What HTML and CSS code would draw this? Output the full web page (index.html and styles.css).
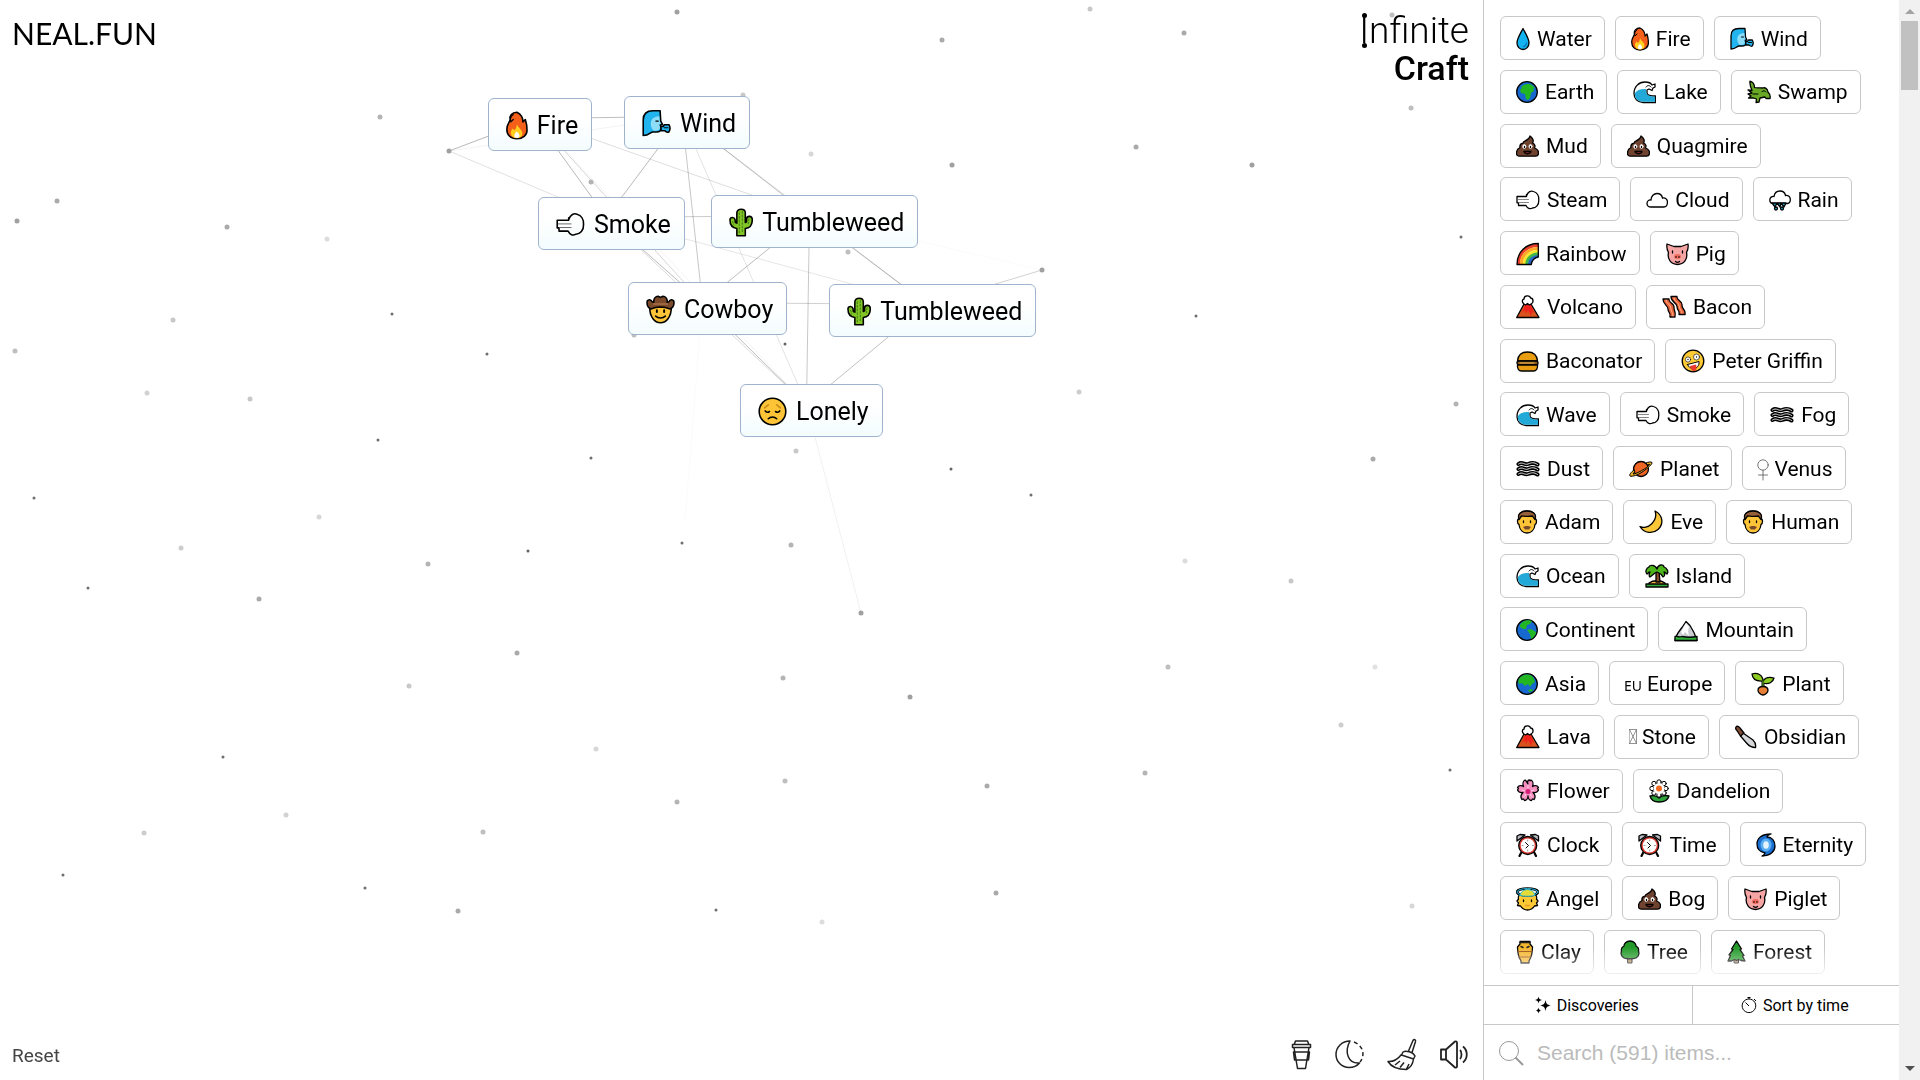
FILE: index.html
```html
<!DOCTYPE html>
<html lang="en">
<head>
    <meta charset="UTF-8">
    <meta name="viewport" content="width=device-width, initial-scale=1.0">
    <title>Infinite Craft</title>
    <link rel="stylesheet" href="styles.css">
</head>
<body>
    <!-- icon set -->
    <svg class="sprite" aria-hidden="true">
        <g id="drop">
            <path fill="#12b3f0" d="M7 1.500C5 5.500 1 11.500 1 16a6 6.500 0 0 0 12 0C13 11.500 9 5.500 7 1.500z"/>
            <path stroke="#0a78bd" d="M10.500 16a3.500 3.500 0 0 1-3 3.500"/>
        </g>
        <g id="fire">
            <path fill="#f4601a" d="M9 1c4 2 5 5 5 8l2-2c1 3 1.400 6 1.400 9 0 4-3.400 7-8.400 7s-8.300-3-8.300-8C.700 11 3 9.500 3.500 7 2.500 4 5 1 9 1z"/>
            <path stroke-width="1" d="M6 3c-2 1-3 4-2 6l2-2"/>
            <path fill="#ffcf1f" stroke="none" d="M9 11c1 3 4 4 4.500 7 .300 3-2 4.500-4.500 4.500S4 21 4 18c0-2 1-2.500 1.500-3.500L7 16c1-1 2-3 2-5z"/>
            <path fill="#fff" stroke="none" d="M9 17c2 2 2.500 3 2 4.500-1 1-3 1-4 0C6.500 20 7 19 9 17z"/>
        </g>
        <g id="wind">
            <path fill="#22b4ee" d="M1 22V9c0-5 3-7.500 8-7.500h6l.500 8.500 1.500 3h-2l1 3c0 2-1 3-4 3H9c-2 0-3 3-8 3z"/>
            <path fill="#8ddcf8" stroke="none" d="M8 9c1-2 4-3 6.300-3l.400 4 1 2.400-1.500.400.800 3c-1 2-3 2.500-5.500 2-2-2-3-6-1.500-8.800z"/>
            <path stroke-width="1" d="M11.500 10h2"/>
            <path fill="#22b4ee" d="M15.500 14.500h2l1-1.500h3.800c1.200 2 1.200 4 0 6-1.500.500-2.600 0-3.300-1h-3z"/>
            <path stroke-width="1" d="M18.500 15.500h3"/>
        </g>
        <g id="earth">
            <circle cx="11" cy="12" r="10.300" fill="#1768cf"/>
            <path fill="#22b722" stroke="none" d="M5 7c3-3 8-4 11-2l3 3-2 1 1 2-3 2-1 5-2 2-2-1-1-5-4-1-1-3 2-2z"/>
        </g>
        <g id="americas">
            <circle cx="11" cy="12" r="10.300" fill="#1768cf"/>
            <path fill="#22b722" stroke="none" d="M4 7c2-4 8-6 12-4l-2 3-3 1-1 4-3 0-3-2zM11 12l4-1 5 3c0 3-3 6-5 7l-1-5z"/>
        </g>
        <g id="asia">
            <circle cx="11" cy="12" r="10.300" fill="#1768cf"/>
            <path fill="#22b722" stroke="none" d="M3 7c3-5 10-6 14-2l2 5-3 2-2 3-2-3-3 2-3-3-3 1c-1-2-1-3 0-5zM12 18l4-1 1 2-4 1z"/>
        </g>
        <g id="wave">
            <path fill="#fff" d="M22.500 22.500H10c-5.500 0-9-4-9-9C1 6.500 6 2 12 2c4 0 6 1 7 3l3-1v3l-2 1-1 2.500-3-1.500-2 1v3c0 2 2 3 8.500 3z"/>
            <path fill="#22a9d8" stroke="none" d="M2 13c2-3 6-4.500 11-4 0 5 1 7.500 9 7.700v5.100H10c-5 0-9-4-8-8.800z"/>
            <path stroke-width="1" d="M13 7c1.500-2 3.500-2 5 0"/>
        </g>
        <g id="swamp">
            <path fill="#69a825" d="M3 1.200C6 2 7.500 4 7.500 7.500c3 1 5 0 8 .500 3-1 5 1 5.500 4 2 2 2.500 4.500 2 6.500h-4l-1-1.500-5 1-1 4-3 .500.500-3.500-3-1H1.500L4 16l-3-2 4-1-4-3 4 .500C3.500 7 2.500 4 3 1.200z"/>
            <path stroke-width="1" d="M6 14h5M15 11.500c1.500-1 3-1 4 .500"/>
        </g>
        <g id="poo">
            <path fill="#6f4330" d="M14 2c3 2 4 5 2.500 7 2.500 1 3 3 2 5 3 1 4 3 4 5 0 2-1 3.200-3 3.200h-16c-2 0-3-1.200-3-3 0-3 1-4.500 3.500-5.500-.500-2.500.500-4 3-4.500 0-3 6-2 7-7z"/>
            <g fill="#fff" stroke="#fff" stroke-width=".800"><ellipse cx="8.300" cy="12.500" rx="1.500" ry="2"/><ellipse cx="14.500" cy="12.500" rx="1.500" ry="2"/></g>
            <path d="M8.500 12.500v1M14.500 12.500v1"/>
            <path fill="#a2342a" d="M8 17.500h7c-.500 3-6.500 3-7 0z"/>
        </g>
        <g id="puff">
            <path d="M10.500 8C12 3.500 15 2.500 17.500 3.500 21 4.500 23 8 22.800 12c.200 5-2.800 8-6.300 8-2.500 1.500-5 .500-6.500-2.500H2.500v-2.700H1V8.500h9.500V6.500"/>
            <path stroke="#666" stroke-width=".800" d="M2 11.500h10.500M3 14.500h9.500"/>
        </g>
        <g id="cloud">
            <path d="M5 19c-2.500 0-4-1.500-4-3.500C1 13 3 11.500 5 12c0-4 3-6.500 6-6.500s5 2 5.500 4.500c3-.500 4.500 1.500 5 3.500 0 3-1 5.500-3.500 5.500z"/>
        </g>
        <g id="rain">
            <path d="M4 15.500c-2 0-3.200-1.500-3.200-3.500C.800 9.500 3 8 5 8.500 5.500 5 8 3 11 3s5 2 5.500 4.500c3-.500 4.500 1.500 4.800 3.500.200 2.500-.800 4.500-2.800 4.500z"/>
            <g fill="#1ba3c9"><path d="M3 15l5 0-2 4zM8 15l4 0-1 4zM12 15h5l-2 4z"/><circle cx="7" cy="20.500" r="1.500"/><circle cx="13" cy="20.500" r="1.500"/></g>
        </g>
        <g id="rainbow">
            <g stroke-width="3.200" stroke-linecap="butt"><path stroke="#e8402b" d="M2.500 22C2.500 11 11 3.500 22 3.500"/><path stroke="#ffa726" d="M5.500 22c0-9 7-15.500 16.500-15.500"/><path stroke="#f7e52e" d="M8.500 22C8.500 15 14 9.500 22 9.500"/><path stroke="#43b649" d="M11 22c0-5.500 5-10 11-10"/><path stroke="#2567c9" d="M13.500 22c0-4 4-7.500 8.500-7.500"/></g>
            <path d="M1 22.500C1 10 10 1.500 22.300 1.500V15c-3.500 0-7 4-7 7.500z"/>
        </g>
        <g id="pig">
            <path fill="#f6a5a5" d="M1 2l7 2.500h7L22 2c.500 3 0 6-1.500 8.500C22 17 18 22.500 11.500 22.500S1 17 2.500 10.500C1 8 .500 5 1 2z"/>
            <path d="M6.500 9v2M16.500 9v2M9.500 19.500c1 .800 3 .800 4 0"/>
            <ellipse cx="11.500" cy="14.500" rx="3.500" ry="2.500" fill="#ef6a5c" stroke="none"/>
            <path stroke-width="1" d="M10 14.500v1M13 14.500v1"/>
        </g>
        <g id="volcano">
            <path fill="#d9531e" d="M8 9h7l8 13.500H.700z"/>
            <path fill="#f0231c" stroke="none" d="M9 10h6l3 8-2-1-1 4-3-6-2 4-1-4-3 3z"/>
            <path fill="#fff" d="M8 9C5.500 7 6 4.500 8 4c0-4 6-4 6.500-1 3 0 3.500 5 .500 6l-1.500 1-2-1.500-2 1.500z"/>
        </g>
        <g id="bacon">
            <path fill="#e8633a" d="M1 4h6c-1 4 6 4 5 9 0 3 2 3 1 9H8c1-5-2-4-2-8 0-4-5-4-5-10z"/>
            <path fill="#e8633a" d="M9 1.500h6c-1 4 6 4 5 9 0 4 4 4 3 9h-6c1-4-2-4-2-8 0-4-6-4-6-10z"/>
            <path stroke="#ffb28c" stroke-width="1" d="M4 5c0 4 5 4 5 9 0 3 2 3 2 7M12 3c0 4 5 4 5.500 9 0 3 2.500 3 2.500 6"/>
        </g>
        <g id="burger">
            <path fill="#e99d10" d="M1.500 12C2 6 6 3 11.500 3S21 6 21.500 12z"/>
            <rect x="1" y="12" width="21" height="4" rx="2" fill="#8a5a1e"/>
            <path stroke="#f4b64e" stroke-width="1" d="M4 14h14"/>
            <path fill="#e99d10" d="M1.500 16h20c.500 3-1 6-4 6H5.500c-3 0-4.500-3-4-6z"/>
        </g>
        <g id="zany">
            <circle cx="12" cy="12" r="10.800" fill="#ffcb35"/>
            <g fill="#fff" stroke-width=".600"><circle cx="7" cy="10.500" r="2.600"/><circle cx="15.500" cy="8" r="3"/></g>
            <path d="M7 10.500v.100M15.500 8v.100"/>
            <path fill="#fff" stroke-width="1" d="M6.500 15.500l11.500-3c.500 4-2 7-5.500 7-3 0-5-1.500-6-4z"/>
            <path fill="#ea3a2e" stroke="none" d="M9 17l6-1.500c1 3 .500 6-1.500 6.500C11 22.500 9.500 20 9 17z"/>
        </g>
        <g id="fog">
            <path stroke-width="4" d="M2.500 7c4-3 6 1.500 9.500 0s6-2 9.500.500M2.500 12c4-3 6 1.500 9.500 0s6-2 9.500.500M2.500 17c4-3 6 1.500 9.500 0s6-2 9.500.500"/>
            <path stroke="#ddd" stroke-width="1" d="M2.500 7c4-3 6 1.500 9.500 0s6-2 9.500.500M2.500 12c4-3 6 1.500 9.500 0s6-2 9.500.500M2.500 17c4-3 6 1.500 9.500 0s6-2 9.500.500"/>
        </g>
        <g id="planet">
            <circle cx="12" cy="12" r="7.500" fill="#ee6524"/>
            <path fill="#f0b429" stroke-width="1" d="M5 13c-3 2-5 5-4 6 2 1 8-1 13-4.500S23.500 7 23 5.500c-1-1-4-.500-6 .500l1.500 1.500 2-.200c-1 2-4 4.200-8 6.400-4 2.200-7.500 3.500-8.500 3.300l1.500-2z"/>
        </g>
        <g id="venus">
            <g stroke="#555" stroke-width=".800"><circle cx="6" cy="8" r="5.200"/><path d="M6 13.200V23M1.500 18h9"/></g>
        </g>
        <g id="man">
            <path fill="#fcc436" d="M3 9C2 3 6 1 11 1s9 2 8 8c2 0 2 5 0 5.500C18.500 20 15 23 11 23s-7.500-3-8-8.500C1 14 1 9 3 9z"/>
            <path fill="#96603a" d="M3 9.500C1 4 5 1 11 1s10 3 8 8.500C18 8 17 7 16.500 6 12 7 7 6 5.500 6z"/>
            <path d="M7.500 11v1.500M14.500 11v1.500"/>
            <path fill="#7a4a2b" stroke="none" d="M7 17c2-1.500 6-1.500 8 0l-2 2.500H9z"/>
        </g>
        <g id="moon">
            <path fill="#fbc638" d="M16 1c8 4 9 13 3 18.500C14 24 5 23.500 1 16.500c3 1.500 8 1 11.500-2.500C16.500 10 17.500 5 16 1z"/>
        </g>
        <g id="island">
            <path fill="#f5b340" d="M4 19c4-3 12-3 16 0v3H4z"/>
            <path fill="#8a4f24" d="M11 7h3l1 11h-4z"/>
            <path fill="#4db51c" d="M12 5C10 0 4 1 4 3 1 4 0 8 2 10c1-1 2-2 3-2-1 2-1 4 0 5 2-1 4-4 7-5 3 1 5 3 6 5 2-1 2-3 1-5 1 0 2 1 3 2 2-2 0-6-3-7 0-3-6-3-7 2z"/>
            <path fill="#32a838" d="M1 20h22v3H1z"/>
        </g>
        <g id="mountain">
            <path fill="#c9cbd0" d="M1 22.500c1-6 4-9 7-13l4-6 4 4 4 7 3 8z"/>
            <path fill="#fff" stroke="none" d="M12 5l3 4-1 4 1 5-4-4-2 3-2-3z"/>
            <path fill="#2fae3a" d="M1 22.500v-4c3-.500 4 1 7 0 5 1 10 1 15 0v4z"/>
        </g>
        <g id="plant">
            <path stroke-width="3" d="M12 9v8"/>
            <path fill="#8ccb20" d="M1 2c5-2 11 1 11 7C6 9.500 1.500 8 1 2z"/>
            <path fill="#8ccb20" d="M12 11c0-4 4-7 11-5-1 4-5 7-11 5z"/>
            <path stroke="#5a9e18" d="M12 9v7"/>
            <path fill="#e77f36" d="M12 14.500c4 0 5 2 5 4s-3 4.500-5 4.500-5-2.500-5-4.500 1-4 5-4z"/>
        </g>
        <g id="tofu">
            <path stroke="#777" stroke-width=".800" d="M.500 4.500h7v14h-7zM.500 4.500l7 14M7.500 4.500l-7 14"/>
        </g>
        <g id="knife">
            <path fill="#d4d6da" d="M8 8l10 7c2 2 3 5 2.500 7.500-4 0-7-2-9-4.500l-6-7z"/>
            <path fill="#7c4a30" d="M1 2c1-1.500 3-.500 4 1l4 5-3.500 3L1.500 5C.500 4 .500 3 1 2z"/>
        </g>
        <g id="flower">
            <path fill="#f48fc0" d="M12 5c-1-2 0-4 1-4.200l1 1 1-.800c2 1 2.500 4 1.500 6.500 2-1.500 5-1 6 1l-1 1 1 1.500c-1 2-3 3-5.500 2.500 2 2 2.500 5 1 7l-1.500-.500-1 1.500c-2 0-3.500-2-3.500-4.500 0 2.500-1.500 4.500-3.500 4.500l-1-1.500-1.500.500c-1.500-2-1-5 1-7-2.500.500-4.500-.500-5.500-2.500l1-1.500-1-1C2.500 6.500 5.500 6 7.500 7.500 6.500 5 7 2 9 1l1 .800z"/>
            <path stroke="#ffd0e6" stroke-width="1" d="M12 9V6M9 12l-3-1M15 12l3-1M10 15l-2 3M14 15l2 3"/>
            <circle cx="12" cy="12.500" r="2.500" fill="#d81e76" stroke="none"/>
        </g>
        <g id="daisy">
            <path fill="#2fa33c" d="M1 17c4-1 7 0 9 2 2-2 6-3 10-2-1 4-4 6-10 6S2 21 1 17z"/>
            <g fill="#fff" stroke-width="1"><circle cx="10" cy="3" r="2.200"/><circle cx="15" cy="4.500" r="2.200"/><circle cx="17" cy="9.500" r="2.200"/><circle cx="15" cy="14" r="2.200"/><circle cx="10" cy="16" r="2.200"/><circle cx="5" cy="14" r="2.200"/><circle cx="3" cy="9.500" r="2.200"/><circle cx="5" cy="4.500" r="2.200"/></g>
            <circle cx="10" cy="9.500" r="5.500" fill="#fff" stroke="none"/>
            <circle cx="10" cy="9.500" r="3" fill="#f26a21" stroke="none"/>
        </g>
        <g id="clock">
            <path stroke-width="2.200" d="M5 20l-1.500 3M18.500 20l1.500 3"/>
            <path fill="#b8bcc2" d="M1 8V3l3-1.500 5 .500zM22.500 8V3l-3-1.500-5 .500z"/>
            <circle cx="11.700" cy="12.500" r="9" fill="#d8382c"/>
            <circle cx="11.700" cy="12.500" r="7" fill="#fff" stroke="none"/>
            <path stroke-width="1" d="M9.500 9.500l3 3-2.500 2.500"/>
            <path stroke="#999" stroke-width="1" d="M11.700 7v1M11.700 17v1M6 12.500h1M16.500 12.500h1"/>
        </g>
        <g id="cyclone">
            <path fill="#1b6fd0" d="M15 1c-3 1-4 2-4 3 5 0 8 4 8 9s-4 9.500-13 10c2-1 3-2 3-3-5-1-8-4-8-9 0-6 5-10 14-10z"/>
            <ellipse cx="10" cy="12" rx="5.500" ry="6.500" fill="#5aaef2" stroke="none"/>
            <ellipse cx="10" cy="12" rx="2.800" ry="3.800" fill="#e4f4ff" stroke="none"/>
        </g>
        <g id="angel">
            <path fill="#fcc935" d="M3 8C2 10 2 11 2.500 12l-1.500 2 1.500 2-1 2.500 3 .500c2 3 4 4 7 4s5-1 7-4l3-.500-1-2.500 1.500-2-1.500-2c.500-1 .500-2-.500-4z"/>
            <ellipse cx="11.500" cy="5" rx="10.500" ry="3.500" stroke-width="2.600"/>
            <ellipse cx="11.500" cy="5" rx="10.500" ry="3.500" stroke="#29b4d8" stroke-width="1"/>
            <path fill="#e5dd37" stroke="#29b4d8" stroke-width="1" d="M4 8.500C5 .500 18 .500 19 8.500c-4 1-11 1-15 0z"/>
            <path d="M7.500 13v1.500M15.500 13v1.500"/>
            <path stroke="#e89a2a" d="M9.500 18.500h4"/>
        </g>
        <g id="jar">
            <path fill="#f4b62c" d="M4 1.500h10v2.500l2.500 3c0 5-1 10-3.500 14v2H5v-2C2.500 17 1.500 12 1.500 7L4 4z"/>
            <path stroke="#9a4e12" stroke-width="1" d="M2 11.500h14M2.500 17h12"/>
            <path stroke="#222" stroke-width="1.500" d="M4 2.500h10M5 6.500l2 1M13 6.500l-2 1"/>
        </g>
        <g id="tree">
            <path fill="#b0855c" stroke-width="1" d="M8 17h4v6H8z"/>
            <path fill="#239a28" d="M10 1c4 0 6 3 6 5 2 1 3 3 2.500 5C20 15 17 19 13 18.500c-2 .500-4 .500-6 0C3 19 0 15 1.500 11 1 9 2 7 4 6c0-2 2-5 6-5z"/>
        </g>
        <g id="pine">
            <path fill="#b0855c" stroke-width="1" d="M7.500 19h4v4h-4z"/>
            <path fill="#239a28" d="M9.500 1l5 8-1.500.500 4 6-1.500.500 2.500 5-4-.500-2.500-1-2 1-2-1-3 1.500-3.500 0 2.500-5.500L2 15l4-5.500L4.500 9z"/>
        </g>
        <g id="cactus">
            <path fill="#82c526" d="M6.500 23v-6C2 16.500.800 13.500.800 10c0-3 3.700-2.500 4.200-.500l.300 2.500 1.200.500V4c0-4 7-4 7 0v8l1-.500V9c.500-3 4.500-2.500 4.700 0 .300 4-1.200 7.500-5.700 8v6z"/>
            <path stroke="#3d7a12" stroke-width=".800" stroke-dasharray="1.500 1.500" d="M8.500 4v17M11 3v18M3 11l1 3M16.500 9l-.500 4"/>
        </g>
        <g id="cowboy">
            <path fill="#fcc436" d="M3 10c0 8 4 13 9 13s9-5 9-13z"/>
            <path fill="#7a4a2b" d="M1 5c1-1.500 3-1.500 4 .500L6.500 6C6 3 8 1 10 1l2 1 2-1c2 0 4 2 3.500 5L19 5.500c1-2 3-2 4-.500.500 3-.500 5.500-3 6.500-5-2-11-2-16 0C1.500 10.500.500 8 1 5z"/>
            <path stroke="#a9724b" d="M6.500 7.500h11"/>
            <path stroke-width="1.600" d="M9 12.500v1.500M15 12.500v1.500"/><path d="M8 17.500c2 2 6 2 8 0"/>
        </g>
        <g id="pensive">
            <circle cx="12" cy="12" r="11" fill="#fcc436"/>
            <path d="M6 11.500c1 1.200 2.500 1.200 3.500.500M14.500 12c1 .700 2.500.700 3.500-.500M8.500 18c2-2 5-2 7 0"/>
            <path stroke="#c98a1c" d="M5.500 9l3-2.500M18.500 9l-3-2.500"/>
        </g>
    </svg>

    <div class="container">
        <main class="board">
            <canvas class="particles" id="particles"></canvas>
            <a class="site-logo" href="#">NEAL.FUN</a>
            <h1 class="logo"><span class="logo-top"><span class="logo-initial">I</span>nfinite</span><span class="logo-bottom">Craft</span></h1>

            <div class="instance pos-fire"><svg class="icon" viewBox="0 0 18 24"><use href="#fire"/></svg>Fire</div>
            <div class="instance pos-wind"><svg class="icon" viewBox="0 0 24 24"><use href="#wind"/></svg>Wind</div>
            <div class="instance pos-smoke"><svg class="icon" viewBox="0 0 24 24"><use href="#puff"/></svg>Smoke</div>
            <div class="instance pos-tumbleweed"><svg class="icon" viewBox="0 0 20 24"><use href="#cactus"/></svg>Tumbleweed</div>
            <div class="instance pos-cowboy"><svg class="icon" viewBox="0 0 24 24"><use href="#cowboy"/></svg>Cowboy</div>
            <div class="instance pos-tumbleweed-2"><svg class="icon" viewBox="0 0 20 24"><use href="#cactus"/></svg>Tumbleweed</div>
            <div class="instance pos-lonely"><svg class="icon" viewBox="0 0 24 24"><use href="#pensive"/></svg>Lonely</div>

            <footer class="board-footer">
                <button class="reset">Reset</button>
                <div class="tools">
                    <button class="tool" aria-label="Coffee"><svg viewBox="0 0 30 30"><path d="M8 6l1.500-4h12L23 6M6.500 5.500h18v3h-18zM8 8.500l3.500 21h8l3.500-21M7.500 13h16l-1 8h-14z"/></svg></button>
                    <button class="tool" aria-label="Dark mode"><svg viewBox="0 0 30 30"><path d="M13 2C5 2-1 8-1 15.500S5 28.500 12 28.500c4.500 0 8-1.500 10.500-4.500C11 25 7 13 13 2z"/><path stroke-dasharray="4 3" d="M17 3c10 4 11 14 6 20"/></svg></button>
                    <button class="tool" aria-label="Clear board"><svg viewBox="0 0 30 30"><path d="M20.500 12L25 1.500c1-1.500 3-1 2.500 1L24 13.500M15 13c3-2 10 0 12 4l-1.500 3L13.500 16zM13.500 15.500C10 20 6 23 0 22.500c3 5 9 8 18.500 8C24 28 25 24 25.500 20M7 26l5-4M12 28.500l4-5M18.500 30l2.500-5"/></svg></button>
                    <button class="tool" aria-label="Sound"><svg viewBox="0 0 30 30"><path stroke-width="1.800" d="M2 10.500h5v10H2zM7 10.500l9-8c1-.500 2 0 2 1v24c0 1-1 1.500-2 1l-9-8M21 11c2 2 2 7 0 9M24 7.500c5 4 5 12 0 16"/></svg></button>
                </div>
            </footer>
        </main>

        <aside class="sidebar">
            <div class="items">
                <button class="item"><svg class="icon" viewBox="0 0 14 24"><use href="#drop"/></svg>Water</button>
                <button class="item"><svg class="icon" viewBox="0 0 18 24"><use href="#fire"/></svg>Fire</button>
                <button class="item"><svg class="icon" viewBox="0 0 24 24"><use href="#wind"/></svg>Wind</button>
                <button class="item"><svg class="icon" viewBox="0 0 22 24"><use href="#earth"/></svg>Earth</button>
                <button class="item"><svg class="icon" viewBox="0 0 23 24"><use href="#wave"/></svg>Lake</button>
                <button class="item"><svg class="icon" viewBox="0 0 24 24"><use href="#swamp"/></svg>Swamp</button>
                <button class="item"><svg class="icon" viewBox="0 0 23 24"><use href="#poo"/></svg>Mud</button>
                <button class="item"><svg class="icon" viewBox="0 0 23 24"><use href="#poo"/></svg>Quagmire</button>
                <button class="item"><svg class="icon" viewBox="0 0 24 24"><use href="#puff"/></svg>Steam</button>
                <button class="item"><svg class="icon" viewBox="0 0 22 24"><use href="#cloud"/></svg>Cloud</button>
                <button class="item"><svg class="icon" viewBox="0 0 22 24"><use href="#rain"/></svg>Rain</button>
                <button class="item"><svg class="icon" viewBox="0 0 23 24"><use href="#rainbow"/></svg>Rainbow</button>
                <button class="item"><svg class="icon" viewBox="0 0 23 24"><use href="#pig"/></svg>Pig</button>
                <button class="item"><svg class="icon" viewBox="0 0 24 24"><use href="#volcano"/></svg>Volcano</button>
                <button class="item"><svg class="icon" viewBox="0 0 24 24"><use href="#bacon"/></svg>Bacon</button>
                <button class="item"><svg class="icon" viewBox="0 0 23 24"><use href="#burger"/></svg>Baconator</button>
                <button class="item"><svg class="icon" viewBox="0 0 24 24"><use href="#zany"/></svg>Peter Griffin</button>
                <button class="item"><svg class="icon" viewBox="0 0 23 24"><use href="#wave"/></svg>Wave</button>
                <button class="item"><svg class="icon" viewBox="0 0 24 24"><use href="#puff"/></svg>Smoke</button>
                <button class="item"><svg class="icon" viewBox="0 0 24 24"><use href="#fog"/></svg>Fog</button>
                <button class="item"><svg class="icon" viewBox="0 0 24 24"><use href="#fog"/></svg>Dust</button>
                <button class="item"><svg class="icon" viewBox="0 0 24 24"><use href="#planet"/></svg>Planet</button>
                <button class="item item-plain"><svg class="icon" viewBox="0 0 12 24"><use href="#venus"/></svg>Venus</button>
                <button class="item"><svg class="icon" viewBox="0 0 22 24"><use href="#man"/></svg>Adam</button>
                <button class="item"><svg class="icon" viewBox="0 0 24 24"><use href="#moon"/></svg>Eve</button>
                <button class="item"><svg class="icon" viewBox="0 0 22 24"><use href="#man"/></svg>Human</button>
                <button class="item"><svg class="icon" viewBox="0 0 23 24"><use href="#wave"/></svg>Ocean</button>
                <button class="item"><svg class="icon" viewBox="0 0 24 24"><use href="#island"/></svg>Island</button>
                <button class="item"><svg class="icon" viewBox="0 0 22 24"><use href="#americas"/></svg>Continent</button>
                <button class="item"><svg class="icon" viewBox="0 0 24 24"><use href="#mountain"/></svg>Mountain</button>
                <button class="item"><svg class="icon" viewBox="0 0 22 24"><use href="#asia"/></svg>Asia</button>
                <button class="item item-plain"><span class="flag">EU</span>Europe</button>
                <button class="item"><svg class="icon" viewBox="0 0 24 24"><use href="#plant"/></svg>Plant</button>
                <button class="item"><svg class="icon" viewBox="0 0 24 24"><use href="#volcano"/></svg>Lava</button>
                <button class="item item-plain"><svg class="icon" viewBox="0 0 8 24"><use href="#tofu"/></svg>Stone</button>
                <button class="item"><svg class="icon" viewBox="0 0 22 24"><use href="#knife"/></svg>Obsidian</button>
                <button class="item"><svg class="icon" viewBox="0 0 24 24"><use href="#flower"/></svg>Flower</button>
                <button class="item"><svg class="icon" viewBox="0 0 21 24"><use href="#daisy"/></svg>Dandelion</button>
                <button class="item"><svg class="icon" viewBox="0 0 24 24"><use href="#clock"/></svg>Clock</button>
                <button class="item"><svg class="icon" viewBox="0 0 24 24"><use href="#clock"/></svg>Time</button>
                <button class="item"><svg class="icon" viewBox="0 0 20 24"><use href="#cyclone"/></svg>Eternity</button>
                <button class="item"><svg class="icon" viewBox="0 0 23 24"><use href="#angel"/></svg>Angel</button>
                <button class="item"><svg class="icon" viewBox="0 0 23 24"><use href="#poo"/></svg>Bog</button>
                <button class="item"><svg class="icon" viewBox="0 0 23 24"><use href="#pig"/></svg>Piglet</button>
                <button class="item"><svg class="icon" viewBox="0 0 18 24"><use href="#jar"/></svg>Clay</button>
                <button class="item"><svg class="icon" viewBox="0 0 20 24"><use href="#tree"/></svg>Tree</button>
                <button class="item"><svg class="icon" viewBox="0 0 19 24"><use href="#pine"/></svg>Forest</button>
            </div>
            <div class="controls">
                <button class="control"><svg class="control-icon" viewBox="0 0 16 16"><path fill="#000" d="M10.500 3c.800 4 1.500 4.700 5.500 5.500-4 .800-4.700 1.500-5.500 5.500-.800-4-1.500-4.700-5.500-5.500 4-.800 4.700-1.500 5.500-5.500zM3.500-.500c.500 2.500 1 3 3.500 3.500-2.500.500-3 1-3.500 3.500C3 4 2.500 3.500 0 3c2.500-.500 3-1 3.500-3.500zM3.500 10.500c.400 2 1 2.600 3 3-2 .400-2.600 1-3 3-.400-2-1-2.600-3-3 2-.400 2.600-1 3-3z"/></svg>Discoveries</button>
                <button class="control"><svg class="control-icon" viewBox="0 0 16 16"><path fill="none" stroke="#000" d="M8 2a6.800 6.800 0 1 1-.100 0zM6.500.500h3M8 .500V2M13 2l2 2M8 9L4.500 5.500"/></svg>Sort by time</button>
            </div>
            <label class="search">
                <svg class="search-icon" viewBox="0 0 26 26"><circle cx="11" cy="11" r="9.500"/><path stroke-width="2" d="M17.500 17.500L25 25"/></svg>
                <input class="search-input" type="text" placeholder="Search (591) items..." aria-label="Search items">
            </label>
        </aside>

        <div class="scrollbar" aria-hidden="true">
            <span class="arrow-up"></span>
            <span class="thumb"></span>
            <span class="arrow-down"></span>
        </div>
    </div>

    <script>
        // x, y, radius, grey level
        const particles = [
            [677, 12, 2, 160], [1090, 9, 2, 200], [1184, 33, 2, 170], [942, 40, 2, 170], [1392, 15, 2, 190],
            [380, 117, 2, 180], [449, 151, 2, 160], [591, 182, 2, 180], [743, 95, 2, 200], [811, 154, 2, 215],
            [952, 165, 2, 160], [1136, 147, 2, 170], [1252, 165, 2, 160], [1411, 108, 2, 190], [57, 201, 2, 170],
            [17, 221, 2, 160], [227, 227, 2, 170], [327, 239, 2, 220], [848, 252, 2, 190], [1042, 270, 2, 160],
            [173, 320, 2, 200], [392, 314, 1, 110], [15, 351, 2, 190], [487, 354, 1, 110], [634, 335, 2, 190],
            [785, 344, 1, 100], [1196, 316, 1, 110], [1461, 237, 1, 110], [1456, 404, 2, 180], [147, 393, 2, 210],
            [250, 399, 2, 200], [1079, 392, 2, 205], [378, 440, 1, 110], [591, 458, 1, 110], [796, 451, 2, 200],
            [951, 469, 1, 100], [1031, 495, 1, 110], [1373, 459, 2, 170], [34, 498, 1, 110], [319, 517, 2, 215],
            [181, 548, 2, 205], [428, 564, 2, 180], [528, 551, 1, 100], [682, 543, 1, 110], [791, 545, 2, 180],
            [1185, 561, 2, 220], [1291, 581, 2, 200], [88, 588, 1, 110], [259, 599, 2, 170], [861, 613, 2, 160],
            [517, 653, 2, 170], [409, 686, 2, 200], [783, 678, 2, 180], [910, 697, 2, 160], [1168, 667, 2, 190],
            [1375, 667, 2, 225], [1341, 725, 2, 205], [223, 757, 1, 110], [596, 749, 2, 215], [785, 781, 2, 190],
            [987, 786, 2, 170], [1145, 773, 2, 180], [1450, 770, 1, 110], [144, 833, 2, 205], [286, 815, 2, 210],
            [483, 832, 2, 190], [677, 802, 2, 180], [63, 875, 1, 110], [365, 888, 1, 110], [458, 911, 2, 170],
            [716, 910, 1, 110], [822, 922, 2, 220], [996, 893, 2, 170], [1412, 906, 2, 215]
        ];
        const links = [
            [0, 449, 151, 0.28], [1, 449, 151, 0.05], [2, 449, 151, 0.12], [5, 1042, 270, 0.18],
            [3, 1042, 270, 0.02], [6, 861, 613, 0.06], [4, 685, 520, 0.02]
        ];

        function draw() {
            const canvas = document.getElementById('particles');
            const board = canvas.parentElement;
            canvas.width = board.clientWidth;
            canvas.height = board.clientHeight;
            const ctx = canvas.getContext('2d');

            const nodes = [...document.querySelectorAll('.instance')].map(el => ({
                x: el.offsetLeft + el.offsetWidth / 2 - 5,
                y: el.offsetTop + el.offsetHeight / 2 - 6
            }));

            function line(a, b, opacity) {
                ctx.strokeStyle = `rgba(0, 0, 0, ${opacity})`;
                ctx.beginPath();
                ctx.moveTo(a.x, a.y);
                ctx.lineTo(b.x, b.y);
                ctx.stroke();
            }

            nodes.forEach((a, i) => {
                nodes.slice(i + 1).forEach(b => {
                    const distance = Math.hypot(a.x - b.x, a.y - b.y);
                    const opacity = 0.38 * (1 - distance / 450);
                    if (opacity > 0) line(a, b, opacity);
                });
            });
            links.forEach(([i, x, y, opacity]) => line(nodes[i], { x, y }, opacity));

            particles.forEach(([x, y, r, grey]) => {
                ctx.fillStyle = `rgb(${grey}, ${grey}, ${grey})`;
                ctx.beginPath();
                ctx.arc(x, y, r + 0.5, 0, Math.PI * 2);
                ctx.fill();
            });
        }

        draw();
        window.addEventListener('resize', draw);
    </script>
</body>
</html>
```
FILE: styles.css
```css
* {
    box-sizing: border-box;
}
body {
    margin: 0;
    font-family: Roboto, "Liberation Sans", sans-serif;
    background: #fff;
    color: #000;
}
button {
    font-family: inherit;
    color: inherit;
    background: none;
    border: none;
    padding: 0;
    cursor: pointer;
}
.sprite {
    position: absolute;
    width: 0;
    height: 0;
}
.container {
    display: flex;
    height: 100vh;
    overflow: hidden;
}

/* board */
.board {
    position: relative;
    flex: 1;
    display: grid;
    grid-template-columns: 1fr auto;
    grid-template-rows: 1fr auto;
}
.particles {
    position: absolute;
    top: 0;
    left: 0;
}
.site-logo {
    position: relative;
    justify-self: start;
    align-self: start;
    padding: 12px;
    font-family: Lato, sans-serif;
    font-size: 30px;
    line-height: 42px;
    color: #000;
    text-decoration: none;
}
.logo {
    position: relative;
    display: flex;
    flex-direction: column;
    align-items: flex-end;
    align-self: start;
    margin: 0;
    padding: 9px 14px;
}
.logo-top {
    font-size: 37px;
    font-weight: 300;
    line-height: 44px;
}
.logo-initial {
    position: relative;
}
.logo-initial::before,
.logo-initial::after {
    content: "";
    position: absolute;
    left: 3px;
    width: 5px;
    height: 5px;
    border-radius: 50%;
    background: #000;
}
.logo-initial::before {
    top: 4px;
}
.logo-initial::after {
    bottom: 4px;
}
.logo-bottom {
    font-size: 34px;
    font-weight: 500;
    line-height: 30px;
}
.icon {
    flex: none;
    height: 24px;
    fill: none;
    stroke: #000;
    stroke-width: 1.3;
    stroke-linejoin: round;
    stroke-linecap: round;
}
.instance {
    position: absolute;
    display: flex;
    align-items: center;
    gap: 9px;
    height: 53px;
    padding: 1px 13px 0 17px;
    border: 1px solid #9fb3cc;
    border-radius: 6px;
    background: linear-gradient(#fff 40%, #f3fcfe);
    font-size: 25px;
    white-space: nowrap;
}
.instance .icon {
    height: 29px;
}
.pos-fire { left: 488px; top: 98px; }
.pos-wind { left: 624px; top: 96px; }
.pos-smoke { left: 538px; top: 197px; }
.pos-tumbleweed { left: 711px; top: 195px; }
.pos-cowboy { left: 628px; top: 282px; }
.pos-tumbleweed-2 { left: 829px; top: 284px; }
.pos-lonely { left: 740px; top: 384px; }

.board-footer {
    position: relative;
    grid-column: 1 / -1;
    display: flex;
    justify-content: space-between;
    align-items: center;
    padding: 10px 14px 10px 12px;
}
.reset {
    padding-top: 2px;
    font-size: 19px;
    color: #444;
}
.tools {
    display: flex;
    gap: 21px;
}
.tool {
    width: 30px;
    height: 32px;
}
.tool svg {
    display: block;
    width: 30px;
    height: 30px;
    fill: none;
    stroke: #222;
    stroke-width: 1.5;
    stroke-linejoin: round;
    overflow: visible;
}

/* sidebar */
.sidebar {
    width: 416px;
    display: flex;
    flex-direction: column;
    border-left: 1px solid #c8c8c8;
}
.items {
    position: relative;
    flex: 1;
    min-height: 0;
    display: flex;
    flex-wrap: wrap;
    align-content: space-between;
    column-gap: 10px;
    padding: 16px 24px 11px 16px;
}
.items::after {
    content: "";
    position: absolute;
    left: 0;
    right: 0;
    bottom: 0;
    height: 38px;
    background: linear-gradient(rgba(255, 255, 255, 0), #fff);
    pointer-events: none;
}
.item {
    display: flex;
    align-items: center;
    gap: 7px;
    height: 44px;
    padding: 1px 12px 0 15px;
    border: 1px solid #c8c8c8;
    border-radius: 6px;
    font-size: 21px;
    white-space: nowrap;
}
/* icons that fall back to a plain glyph sit tighter */
.item-plain {
    gap: 5px;
    padding-left: 14px;
}
.flag {
    font-family: "Noto Sans", sans-serif;
    font-size: 14px;
    padding-top: 3px;
}
.controls {
    display: grid;
    grid-template-columns: 1fr 1fr;
    height: 40px;
    border-top: 1px solid #c8c8c8;
    border-bottom: 1px solid #c8c8c8;
}
.control {
    display: flex;
    justify-content: center;
    align-items: center;
    gap: 6px;
    padding-right: 2px;
    font-size: 16px;
}
.control + .control {
    border-left: 1px solid #c8c8c8;
}
.control-icon {
    width: 16px;
    height: 16px;
    overflow: visible;
}
.search {
    display: flex;
    align-items: center;
    gap: 13px;
    height: 55px;
    padding: 0 14px;
}
.search-icon {
    flex: none;
    width: 26px;
    height: 26px;
    fill: none;
    stroke: #999;
    stroke-width: 1;
}
.search-input {
    flex: 1;
    min-width: 0;
    border: none;
    outline: none;
    padding: 0;
    background: none;
    font-family: "Liberation Sans", Arial, sans-serif;
    font-size: 21px;
}
.search-input::placeholder {
    color: #bbb;
}

.scrollbar {
    width: 21px;
    display: flex;
    flex-direction: column;
    align-items: center;
    padding: 9px 0;
    background: #f1f1f1;
}
.arrow-up,
.arrow-down {
    border: 5px solid transparent;
}
.arrow-up {
    border-top: none;
    border-bottom-color: #a3a3a3;
}
.arrow-down {
    margin-top: auto;
    border-bottom: none;
    border-top-color: #505050;
}
.thumb {
    width: 17px;
    height: 69px;
    margin-top: 7px;
    background: #c1c1c1;
}
```
